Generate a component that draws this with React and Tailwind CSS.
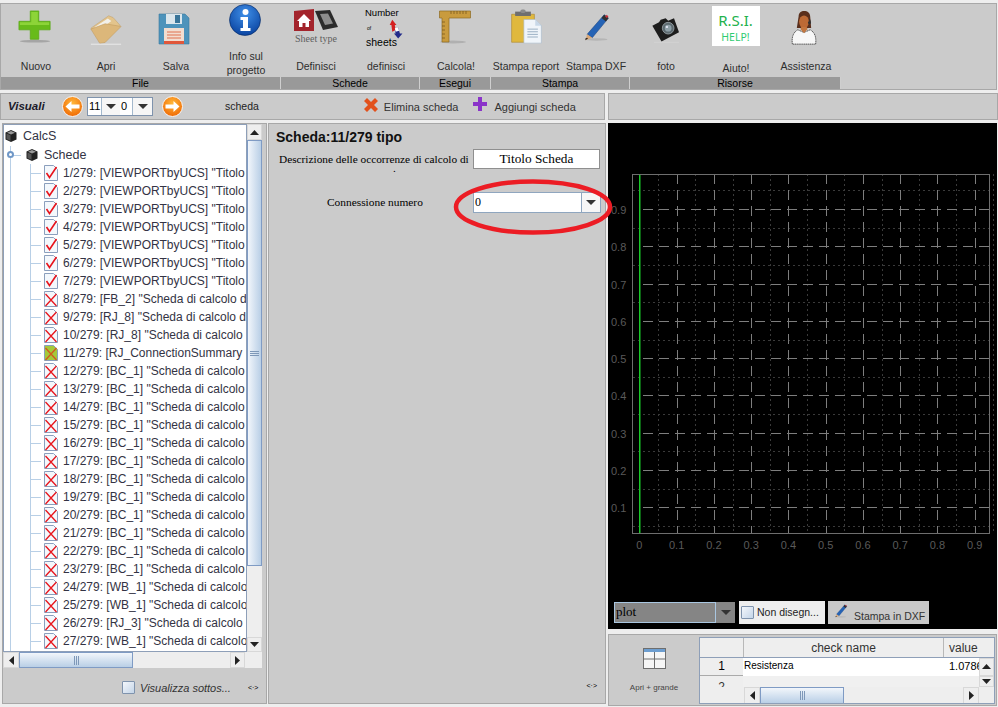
import React from 'react';

const treeRows = [
  ['1/279: [VIEWPORTbyUCS] "Titolo', 'ok'],
  ['2/279: [VIEWPORTbyUCS] "Titolo', 'ok'],
  ['3/279: [VIEWPORTbyUCS] "Titolo', 'ok'],
  ['4/279: [VIEWPORTbyUCS] "Titolo', 'ok'],
  ['5/279: [VIEWPORTbyUCS] "Titolo', 'ok'],
  ['6/279: [VIEWPORTbyUCS] "Titolo', 'ok'],
  ['7/279: [VIEWPORTbyUCS] "Titolo', 'ok'],
  ['8/279: [FB_2] "Scheda di calcolo d', 'no'],
  ['9/279: [RJ_8] "Scheda di calcolo d', 'no'],
  ['10/279: [RJ_8] "Scheda di calcolo', 'no'],
  ['11/279: [RJ_ConnectionSummary', 'sel'],
  ['12/279: [BC_1] "Scheda di calcolo', 'no'],
  ['13/279: [BC_1] "Scheda di calcolo', 'no'],
  ['14/279: [BC_1] "Scheda di calcolo', 'no'],
  ['15/279: [BC_1] "Scheda di calcolo', 'no'],
  ['16/279: [BC_1] "Scheda di calcolo', 'no'],
  ['17/279: [BC_1] "Scheda di calcolo', 'no'],
  ['18/279: [BC_1] "Scheda di calcolo', 'no'],
  ['19/279: [BC_1] "Scheda di calcolo', 'no'],
  ['20/279: [BC_1] "Scheda di calcolo', 'no'],
  ['21/279: [BC_1] "Scheda di calcolo', 'no'],
  ['22/279: [BC_1] "Scheda di calcolo', 'no'],
  ['23/279: [BC_1] "Scheda di calcolo', 'no'],
  ['24/279: [WB_1] "Scheda di calcolo', 'no'],
  ['25/279: [WB_1] "Scheda di calcolo', 'no'],
  ['26/279: [RJ_3] "Scheda di calcolo', 'no'],
  ['27/279: [WB_1] "Scheda di calcolo', 'no'],
  ['', 'no'],
];

const PlusIcon = () => (
  <svg width="34" height="34" viewBox="0 0 36 36">
    <ellipse cx="18" cy="33" rx="16" ry="1.5" fill="#a5a5a5" />
    <path d="M13 1h9v11h12v9H22v10h-9V21H1v-9h12z" fill="#68bb1a" stroke="#5aa915" strokeWidth="0.8" />
    <path d="M14 2h7v11h12v3H2v-3h12z" fill="#8dd438" />
  </svg>
);

const FolderIcon = () => (
  <svg width="36" height="32" viewBox="0 0 38 36">
    <path d="M2 16L22 2l5 2 8 9L14 30z" fill="#e3c48c" stroke="#bfa070" strokeWidth="0.6" />
    <path d="M6 15l15-10 4 3-15 11z" fill="#f2f0ea" />
    <path d="M2 17l16-6 18 3-18 18-6 1z" fill="#dcb77a" stroke="#c0995d" strokeWidth="0.6" />
    <path d="M2 34h34" stroke="#eeeeee" strokeWidth="1" />
  </svg>
);

const SaveIcon = () => (
  <svg width="32" height="32" viewBox="0 0 32 32">
    <path d="M1 1h26l4 4v26H1z" fill="#4d93bb" stroke="#3b7ba0" strokeWidth="0.6" />
    <rect x="8" y="1" width="16" height="10" fill="#dbe6ec" />
    <rect x="17" y="2" width="5" height="8" fill="#3a7599" />
    <rect x="6" y="15" width="20" height="16" fill="#f2ddd0" />
    <rect x="6" y="28" width="20" height="3" fill="#e0573a" />
    <path d="M9 19h14M9 22h14M9 25h14" stroke="#e0704f" strokeWidth="1" />
  </svg>
);

const InfoIcon = () => (
  <svg width="32" height="32" viewBox="0 0 32 32">
    <defs>
      <radialGradient id="infoG" cx="50%" cy="30%" r="75%">
        <stop offset="0%" stopColor="#3f8fe8" />
        <stop offset="100%" stopColor="#073f9c" />
      </radialGradient>
    </defs>
    <circle cx="16" cy="16" r="15.5" fill="url(#infoG)" stroke="#06285f" strokeWidth="0.6" />
    <circle cx="16.5" cy="8" r="3" fill="#ffffff" />
    <path d="M11.5 13h7.5v11h2.5v3H11.5v-3H14v-8h-2.5z" fill="#ffffff" />
  </svg>
);

const SheetTypeIcon = () => (
  <div className="flex w-[46px] flex-col items-center">
    <svg width="46" height="24" viewBox="0 0 46 24">
      <path d="M1 3l20-2v22L1 23z" fill="#a3242c" />
      <path d="M11 6L4 13h2v6h3.5v-4h3v4H16v-6h2z" fill="#ffffff" />
      <path d="M22 3l15-1 8 17-15 3z" fill="#2b2b2b" />
      <path d="M27 6l8-.5 5 10-8 1.5z" fill="#8d8d8d" />
    </svg>
    <span className='mt-[2px] whitespace-nowrap font-["Liberation_Serif",serif] text-[10px] leading-[10px] text-[#5e5e5e]'>Sheet type</span>
  </div>
);

const NumberSheetsIcon = () => (
  <div className="relative h-[42px] w-[44px] text-black">
    <span className="absolute left-[1px] top-[0px] text-[9.5px] leading-[10px]">Number</span>
    <span className="absolute left-[3px] top-[17px] text-[5px] leading-[6px]">of</span>
    <span className="absolute left-[2px] top-[29px] text-[10.5px] leading-[11px]">sheets</span>
    <svg className="absolute left-[24px] top-[11px]" width="17" height="22" viewBox="0 0 20 24">
      <path d="M5 0l5 6H8l1 6-4 2-1-8H2z" fill="#d42020" />
      <path d="M12 22L7 16h2l-1-4 4-3 2 7h3z" fill="#222a8a" />
      <path d="M8 10l4-1 1 4-4 1z" fill="#ffffff" />
    </svg>
  </div>
);

const RulerIcon = () => (
  <svg width="32" height="34" viewBox="0 0 32 34">
    <ellipse cx="14" cy="32" rx="13" ry="1.5" fill="#b0b0b0" />
    <path d="M0.5 1h31v7H10v24H3V8H0.5z" fill="#c99b3e" stroke="#8d6a22" strokeWidth="0.7" />
    <path d="M12 1v3M15 1v3M18 1v3M21 1v3M24 1v3M27 1v3M3 12h3M3 16h3M3 20h3M3 24h3M3 28h3" stroke="#70521a" strokeWidth="0.7" />
  </svg>
);

const ReportIcon = () => (
  <svg width="35" height="35" viewBox="0 0 36 40">
    <path d="M1 6h26v32H1z" fill="#e0b83e" stroke="#a98632" strokeWidth="0.7" />
    <rect x="5" y="3" width="18" height="5" fill="#6f6f6f" />
    <rect x="11" y="0.5" width="6" height="4" rx="2" fill="#8a8a8a" />
    <path d="M15 12h13l7 7v20H15z" fill="#f0f5fa" stroke="#a8b8c8" strokeWidth="0.7" />
    <path d="M28 12v7h7z" fill="#c8d8e8" />
    <path d="M19 23h12M19 26h12M19 29h12M19 32h12" stroke="#8fa6bc" strokeWidth="1" />
  </svg>
);

const PencilIcon = ({ size = 29 }) => (
  <svg width={size} height={size} viewBox="0 0 32 34">
    <ellipse cx="16" cy="31" rx="13" ry="1.5" fill="#b5b5b5" />
    <path d="M25 2l5 4-19 23-6-4z" fill="#2563b5" stroke="#173f7a" strokeWidth="0.6" />
    <path d="M25 2l5 4-3 4-5-4z" fill="#2f2f2f" />
    <path d="M28 2l2 2-2 2-2-2z" fill="#c7303a" />
    <path d="M5 25l6 4-8 3z" fill="#d9a878" />
    <path d="M3 30l2-1 1 1-3 2z" fill="#222222" />
  </svg>
);

const CameraIcon = () => (
  <svg width="31" height="30" viewBox="0 0 34 36">
    <path d="M0 14l8-4 2-3 6-2 3 3 7-3 6 17-21 11z" fill="#1d1d1d" />
    <circle cx="19" cy="17" r="7" fill="#5d6a70" stroke="#9aa4a8" strokeWidth="1" />
    <circle cx="19" cy="17" r="4" fill="#8fa0a8" />
    <circle cx="17.5" cy="15.5" r="1.4" fill="#dde0ee" />
    <path d="M2 34h30" stroke="#d8d8d8" strokeWidth="0.7" />
  </svg>
);

const SupportIcon = () => (
  <svg width="26" height="34" viewBox="0 0 28 38">
    <path d="M8 6c0-4 3-6 6-6 4 0 7 2 7 7l1 12H6z" fill="#5a2f1c" />
    <ellipse cx="14" cy="12" rx="5.5" ry="7" fill="#bd6a35" />
    <path d="M1 37c-1-8 1-13 6-16l7 3 7-3c5 3 7 8 6 16z" fill="#f7f7f7" stroke="#222222" strokeWidth="0.8" strokeDasharray="1.5 0.6" />
    <path d="M10 20l4 5 4-5-1-2h-6z" fill="#c4763e" />
    <path d="M20 9c1 2 1 5 0 6" stroke="#333333" strokeWidth="1.2" fill="none" />
    <circle cx="20" cy="13" r="1.6" fill="#333333" />
  </svg>
);

const ToolButton = ({ label, children, iconTop = 'pt-[6px]', labelClass = 'mt-0' }) => (
  <div className="flex w-[70px] shrink-0 flex-col items-center overflow-hidden">
    <div className={`flex h-[55px] w-full justify-center ${iconTop}`}>{children}</div>
    <div className={`w-full whitespace-nowrap text-center text-[10.5px] leading-[14px] text-[#2e2e2e] ${labelClass}`}>{label}</div>
  </div>
);

const GroupBar = ({ label, width }) => (
  <div className={`${width} h-[12px] border-r border-[#cfcfcf] bg-[#999999] text-center text-[10.5px] leading-[12px] text-black`}>
    {label}
  </div>
);

const ArrowButton = ({ dir }) => (
  <svg width="21" height="21" viewBox="0 0 21 21">
    <defs>
      <radialGradient id={`arrow-${dir}`} cx="50%" cy="35%" r="65%">
        <stop offset="0%" stopColor="#ffb83a" />
        <stop offset="100%" stopColor="#f06a05" />
      </radialGradient>
    </defs>
    <circle cx="10.5" cy="10.5" r="10" fill={`url(#arrow-${dir})`} stroke="#f5f5f5" strokeWidth="1" />
    {dir === 'left'
      ? <path d="M3.5 10.5l6-5.5v3.5h8v4h-8V16z" fill="#ffffff" />
      : <path d="M17.5 10.5l-6-5.5v3.5h-8v4h8V16z" fill="#ffffff" />}
  </svg>
);

const Caret = ({ className = '' }) => (
  <svg className={className} width="10" height="5" viewBox="0 0 10 5"><path d="M0 0h10L5 5z" fill="#333333" /></svg>
);

const SpinBox = ({ value, inputW, btnW }) => (
  <div className="flex h-[17px] items-center">
    <div className={`${inputW} h-full border-r border-[#a3b8cc] bg-white pl-[1px] text-[11px] leading-[16px] text-black`}>{value}</div>
    <div className={`${btnW} flex h-full items-center justify-center bg-[#f6f6f6]`}><Caret /></div>
  </div>
);

const CubeIcon = () => (
  <svg width="12" height="12" viewBox="0 0 12 12">
    <path d="M6 0l5.5 2.5v7L6 12 .5 9.500v-7z" fill="#222222" />
    <path d="M6 1L10 2.800 6 4.500 2 2.800z" fill="#9a9a9a" />
    <path d="M1.500 3.500L5.500 5.300V10.700L1.500 8.900z" fill="#555555" />
  </svg>
);

const DocIcon = ({ kind }) => (
  <svg className="shrink-0" width="14" height="16" viewBox="0 0 14 16">
    <path d="M.5 .5h9l4 4v11H.5z" fill={kind === 'sel' ? '#a4c93a' : '#f4f8fc'} stroke="#8b9fbd" strokeWidth="1" />
    {kind === 'ok' && <path d="M2.500 8l3 4.500L12.500 2" fill="none" stroke="#e8141c" strokeWidth="1.600" />}
    {kind !== 'ok' && <path d="M1.500 3l11 12M12.500 3l-11 12" stroke={kind === 'sel' ? '#d2591e' : '#e8141c'} strokeWidth="1.300" />}
  </svg>
);

const ScrollArrow = ({ dir }) => {
  const paths = { up: 'M0 5h9L4.500 0z', down: 'M0 0h9L4.500 5z', left: 'M5 0v9L0 4.500z', right: 'M0 0v9l5-4.500z' };
  const size = dir === 'up' || dir === 'down' ? [9, 5] : [5, 9];
  return <svg width={size[0]} height={size[1]} viewBox={`0 0 ${size[0]} ${size[1]}`}><path d={paths[dir]} fill="#222222" /></svg>;
};

const ScrollBtn = ({ dir, className }) => (
  <div className={`flex shrink-0 items-center justify-center border border-[#d8d8d8] bg-[#eeeeee] ${className}`}>
    <ScrollArrow dir={dir} />
  </div>
);

const HGrip = () => (
  <div className="flex gap-[1px]">
    <div className="h-[9px] w-[1px] bg-[#7e98b8]" />
    <div className="h-[9px] w-[1px] bg-[#7e98b8]" />
    <div className="h-[9px] w-[1px] bg-[#7e98b8]" />
  </div>
);

const TreeRow = ({ text, kind }) => (
  <div className="flex h-[18px] shrink-0 items-center">
    <div className="ml-[6px] h-full w-[1px] shrink-0 bg-[#b8cfe6]" />
    <div className="ml-[19px] h-full w-[1px] shrink-0 bg-[#b8cfe6]" />
    <div className="h-[1px] w-[10px] shrink-0 bg-[#b8cfe6]" />
    <div className="ml-[3px] shrink-0"><DocIcon kind={kind} /></div>
    <span className="ml-[5px] shrink-0 whitespace-nowrap text-[12px] leading-[18px] text-[#333344]">{text}</span>
  </div>
);

const TreePanel = () => (
  <div className="flex h-[581px] w-[265px] shrink-0 flex-col border border-[#a8a8a8] bg-[#cbcbcb]">
    <div className="flex h-[528px] shrink-0">
      <div className="w-[244px] shrink-0 overflow-hidden border border-[#8e9fb8] bg-white pt-[1px]">
        <div className="flex h-[20px] items-center pl-[1px]">
          <CubeIcon />
          <span className="ml-[6px] text-[12.5px] text-[#333344]">CalcS</span>
        </div>
        <div className="flex h-[18px] items-center">
          <div className="relative ml-[6px] h-full w-[1px] bg-[#b8cfe6]">
            <div className="absolute left-[-3px] top-[5px] h-[7px] w-[7px] rounded-full border-2 border-[#6f97c7] bg-white" />
          </div>
          <div className="h-[1px] w-[10px] bg-[#b8cfe6]" />
          <div className="ml-[5px]"><CubeIcon /></div>
          <span className="ml-[6px] text-[12.5px] text-[#333344]">Schede</span>
        </div>
        {treeRows.map((r, i) => <TreeRow key={i} text={r[0]} kind={r[1]} />)}
      </div>
      <div className="flex w-[15px] shrink-0 flex-col bg-[#eeeeee]">
        <ScrollBtn dir="up" className="h-[16px] w-[15px]" />
        <div className="flex h-[426px] w-[15px] shrink-0 items-center justify-center border border-[#7f9bc4] bg-gradient-to-r from-[#f2f6fb] to-[#b9cfe6]">
          <div className="flex flex-col gap-[1px]">
            <div className="h-[1px] w-[9px] bg-[#7e98b8]" />
            <div className="h-[1px] w-[9px] bg-[#7e98b8]" />
            <div className="h-[1px] w-[9px] bg-[#7e98b8]" />
          </div>
        </div>
        <div className="flex-1" />
        <ScrollBtn dir="down" className="h-[15px] w-[15px]" />
      </div>
    </div>
    <div className="flex h-[16px] w-[259px] shrink-0 bg-[#eeeeee]">
      <ScrollBtn dir="left" className="w-[16px]" />
      <div className="flex w-[114px] items-center justify-center border border-[#7f9bc4] bg-gradient-to-b from-[#f2f6fb] to-[#b9cfe6]"><HGrip /></div>
      <div className="w-[97px]" />
      <ScrollBtn dir="right" className="w-[15px]" />
      <div className="flex-1" />
    </div>
    <div className="flex flex-1 items-start pt-[13px]">
      <div className="ml-[119px] h-[13px] w-[13px] rounded-[1px] border border-[#7f93ad] bg-gradient-to-br from-[#f4f7fb] to-[#c4d5e8]" />
      <span className="ml-[5px] text-[11px] italic leading-[14px] text-[#333333]">Visualizza sottos...</span>
      <span className="ml-[17px] mt-[2px] text-[7px] leading-[10px] text-black">&lt;·&gt;</span>
    </div>
  </div>
);

const MiddlePanel = () => (
  <div className='flex h-[581px] w-[338px] shrink-0 flex-col border border-[#a8a8a8] bg-[#cbcbcb] font-["Liberation_Serif",serif]'>
    <div className='ml-[7px] mt-[5px] font-["Liberation_Sans",sans-serif] text-[14px] font-bold leading-[17px] text-[#111111]'>Scheda:11/279 tipo</div>
    <div className="ml-[10px] mt-[3px] flex items-center">
      <div className="relative w-[192px] whitespace-nowrap text-[11.3px] leading-[12px] text-black">
        <span>Descrizione delle occorrenze di calcolo di</span>
        <span className="absolute left-[114px] top-[12px] leading-[6px]">.</span>
      </div>
      <div className="ml-[2px] h-[20px] w-[127px] border border-[#8f8f8f] bg-white text-center text-[13.3px] leading-[18px] text-black">Titolo Scheda</div>
    </div>
    <div className="mt-[23px] flex items-center">
      <span className="mb-[2px] ml-[58px] w-[146px] text-[11.4px] leading-[12px] text-black">Connessione numero</span>
      <div className="flex h-[21px] w-[128px] border border-[#8fa6bf] bg-white">
        <span className="flex-1 border-r border-[#8fa6bf] pl-[1px] text-[12px] leading-[18px] text-black">0</span>
        <div className="flex w-[18px] items-center justify-center bg-[#f6f6f6]"><Caret /></div>
      </div>
    </div>
    <div className="flex-1" />
    <div className='mb-[12px] mr-[8px] self-end font-["Liberation_Sans",sans-serif] text-[7px] leading-[10px] text-black'>&lt;·&gt;</div>
  </div>
);

const ticks = [0.1, 0.2, 0.3, 0.4, 0.5, 0.6, 0.7, 0.8, 0.9];
const minors = [0.05, 0.15, 0.25, 0.35, 0.45, 0.55, 0.65, 0.75, 0.85, 0.95];
const px = (v) => 31.4 + 372.5 * v;
const py = (v) => 421.6 - 372.9 * v;

const Plot = () => (
  <svg className="block" width="389" height="478" viewBox="0 0 389 478">
    <g stroke="#3a3a3a" strokeWidth="1" strokeDasharray="2 3">
      {minors.map((v) => <line key={`mv${v}`} x1={Math.round(px(v)) + 0.5} y1="51" x2={Math.round(px(v)) + 0.5} y2="410" />)}
      {minors.map((v) => <line key={`mh${v}`} x1="25" y1={Math.round(py(v)) + 0.5} x2="382" y2={Math.round(py(v)) + 0.5} />)}
    </g>
    <g stroke="#7e7e7e" strokeWidth="1" strokeDasharray="10 6">
      {ticks.map((v) => <line key={`v${v}`} x1={Math.round(px(v)) + 0.5} y1="51" x2={Math.round(px(v)) + 0.5} y2="410" />)}
      {ticks.map((v) => <line key={`h${v}`} x1="35" y1={Math.round(py(v)) + 0.5} x2="382" y2={Math.round(py(v)) + 0.5} />)}
    </g>
    <rect x="24.500" y="51.500" width="357" height="359" fill="none" stroke="#6e6e6e" strokeWidth="1" />
    <rect x="31" y="52" width="1.500" height="358" fill="#18c828" />
    <g fontFamily="Liberation Sans, sans-serif" fontSize="11" fill="#5a5a5a">
      {ticks.map((v) => <text key={`ty${v}`} x="3" y={py(v) + 5}>{v}</text>)}
      <text x={px(0)} y="426" textAnchor="middle">0</text>
      {ticks.map((v) => <text key={`tx${v}`} x={px(v)} y="426" textAnchor="middle">{v}</text>)}
    </g>
  </svg>
);

const ChartPanel = () => (
  <div className="flex h-[506px] shrink-0 flex-col bg-black">
    <Plot />
    <div className="ml-[6px] mt-[1px] flex items-start">
      <div className='flex h-[21px] w-[121px] items-stretch bg-[#858585] font-["Liberation_Serif",serif] text-[13px]'>
        <div className="flex-1 border border-[#a9c6e0] pl-[1px] leading-[18px] text-black">plot</div>
        <div className="flex w-[19px] items-center justify-center"><Caret /></div>
      </div>
      <div className="ml-[4px] mt-[-1px] flex h-[23px] w-[86px] items-center bg-[#eeeeee] pl-[2px]">
        <div className="h-[13px] w-[13px] rounded-[1px] border border-[#7f93ad] bg-gradient-to-br from-[#f4f7fb] to-[#c4d5e8]" />
        <span className="ml-[3px] whitespace-nowrap text-[10.5px] text-[#222222]">Non disegn...</span>
      </div>
      <div className="ml-[3px] mt-[-1px] flex h-[23px] w-[101px] items-center bg-[#c9c9c9] pl-[6px]">
        <div className="mt-[-4px]"><PencilIcon size={14} /></div>
        <span className="ml-[6px] mt-[8px] whitespace-nowrap text-[10.5px] text-[#333333]">Stampa in DXF</span>
      </div>
    </div>
  </div>
);

const TableIcon = () => (
  <svg width="23" height="21" viewBox="0 0 23 21">
    <rect x="0.500" y="0.500" width="22" height="20" fill="#f6f6f6" stroke="#6e6e6e" />
    <rect x="1" y="1" width="21" height="3" fill="#6d9ed0" />
    <path d="M1 11h21M11.500 4v16" stroke="#6e6e6e" />
  </svg>
);

const CheckTable = () => (
  <div className="relative flex h-[67px] w-[296px] shrink-0 flex-col overflow-hidden border border-[#8e9fb8] bg-[#eeeeee] text-[12px] text-[#333333]">
    <div className="flex h-[20px] shrink-0 border-b border-[#8e9fb8]">
      <div className="w-[44px] border-r border-[#b8b8b8]" />
      <div className="w-[200px] border-r border-[#b8b8b8] text-center leading-[20px]">check name</div>
      <div className="pl-[5px] leading-[20px]">value</div>
    </div>
    <div className="flex h-[18px] shrink-0">
      <div className="w-[43px] border-b border-[#aaaaaa] bg-[#eeeeee] text-center leading-[17px] text-black">1</div>
      <div className="flex w-[236px] bg-white">
        <span className="w-[201px] pl-[1px] text-[10px] leading-[16px] text-black">Resistenza</span>
        <span className="w-[35px] overflow-hidden whitespace-nowrap pl-[5px] text-[11px] leading-[16px] text-black">1.0786</span>
      </div>
      <ScrollBtn dir="up" className="h-[18px] w-[15px]" />
    </div>
    <div className="flex h-[11px] shrink-0">
      <div className="h-[11px] w-[43px] overflow-hidden text-center leading-[22px] text-[#333333]">2</div>
      <div className="w-[236px] bg-[#f0f0f0]" />
      <ScrollBtn dir="down" className="h-[11px] w-[15px]" />
    </div>
    <div className="z-10 ml-[44px] flex h-[17px] shrink-0 bg-[#eeeeee]">
      <ScrollBtn dir="left" className="w-[16px]" />
      <div className="flex w-[84px] items-center justify-center border border-[#7f9bc4] bg-gradient-to-b from-[#f2f6fb] to-[#b9cfe6]"><HGrip /></div>
      <div className="w-[119px]" />
      <ScrollBtn dir="right" className="w-[16px]" />
    </div>
  </div>
);

const BottomPanel = () => (
  <div className="mt-[5px] flex h-[72px] items-center border border-[#a8a8a8] bg-[#cbcbcb]">
    <div className="flex w-[90px] shrink-0 flex-col items-center">
      <TableIcon />
      <span className="mt-[14px] text-[8px] leading-[10px] text-[#444444]">Apri + grande</span>
    </div>
    <CheckTable />
  </div>
);

export default function App() {
  return (
    <div className='relative h-[707px] w-[998px] overflow-hidden bg-[#eeeeee] pt-[3px] font-["Liberation_Sans",Arial,sans-serif]'>
      {/* toolbar */}
      <div className="flex h-[87px] w-[997px] flex-col border border-[#a8a8a8] bg-[#cbcbcb]">
        <div className="flex h-[73px] shrink-0">
          <ToolButton label="Nuovo" iconTop="pt-[6px] pr-[2px]"><PlusIcon /></ToolButton>
          <ToolButton label="Apri" iconTop="pt-[10px]"><FolderIcon /></ToolButton>
          <ToolButton label="Salva" iconTop="pt-[9px] pr-[4px]"><SaveIcon /></ToolButton>
          <ToolButton label="Info sul progetto" iconTop="pt-0 pr-[3px]" labelClass="mt-0 !whitespace-normal px-[12px]"><InfoIcon /></ToolButton>
          <ToolButton label="Definisci" iconTop="pt-[4px]"><SheetTypeIcon /></ToolButton>
          <ToolButton label="definisci" iconTop="pt-[4px]"><NumberSheetsIcon /></ToolButton>
          <ToolButton label="Calcola!" iconTop="pt-[6px] pr-[2px]"><RulerIcon /></ToolButton>
          <ToolButton label="Stampa report" iconTop="pt-[5px]"><ReportIcon /></ToolButton>
          <ToolButton label="Stampa DXF" iconTop="pt-[9px]"><PencilIcon /></ToolButton>
          <ToolButton label="foto" iconTop="pt-[10px]"><CameraIcon /></ToolButton>
          <ToolButton label="Aiuto!" iconTop="pt-[2px] pr-[1px]" labelClass="mt-[2px]">
            <div className='flex h-[40px] w-[48px] flex-col items-center bg-white font-["Noto_Sans",sans-serif] text-[#22b14c]'>
              <span className="mt-[5px] text-[15px] leading-[18px]">R.S.I.</span>
              <span className="mt-[2px] text-[10.5px] leading-[12px] text-[#2ecc71]">HELP!</span>
            </div>
          </ToolButton>
          <ToolButton label="Assistenza" iconTop="pt-[7px] pr-[4px]"><SupportIcon /></ToolButton>
        </div>
        <div className="flex">
          <GroupBar label="File" width="w-[280px]" />
          <GroupBar label="Schede" width="w-[139px]" />
          <GroupBar label="Esegui" width="w-[71px]" />
          <GroupBar label="Stampa" width="w-[139px]" />
          <GroupBar label="Risorse" width="w-[211px]" />
        </div>
      </div>

      {/* navigation row */}
      <div className="mt-[3px] flex h-[27px] gap-[3px]">
        <div className="flex w-[605px] shrink-0 items-center border border-[#a8a8a8] bg-[#cbcbcb]">
          <span className="ml-[7px] w-[54px] text-[11.5px] font-bold italic text-[#1a1a2a]">Visuali</span>
          <ArrowButton dir="left" />
          <div className="ml-[4px] flex border border-[#7f93ad] bg-white">
            <SpinBox value="11" inputW="w-[14px]" btnW="w-[18px]" />
            <SpinBox value="0" inputW="w-[13px]" btnW="w-[19px]" />
          </div>
          <div className="ml-[9px]"><ArrowButton dir="right" /></div>
          <span className="ml-[42px] text-[10.5px] text-[#222222]">scheda</span>
          <svg className="mb-[4px] ml-[105px]" width="14" height="14" viewBox="0 0 14 14"><path d="M3 0l4 4 4-4 3 3-4 4 4 4-3 3-4-4-4 4-3-3 4-4-4-4z" fill="#e2511c" /></svg>
          <span className="ml-[6px] mt-[2px] text-[11px] text-[#333333]">Elimina scheda</span>
          <svg className="mb-[6px] ml-[15px]" width="14" height="14" viewBox="0 0 14 14"><path d="M5 0h4v5h5v4H9v5H5V9H0V5h5z" fill="#8a34c9" /></svg>
          <span className="ml-[7px] mt-[2px] text-[11px] text-[#333333]">Aggiungi scheda</span>
        </div>
        <div className="flex-1 border border-[#a8a8a8] bg-[#cbcbcb]" />
      </div>

      {/* main area */}
      <div className="mt-[3px] flex">
        <div className="ml-[2px]"><TreePanel /></div>
        <div className="ml-[1px]"><MiddlePanel /></div>
        <div className="ml-[2px] w-[389px] shrink-0">
          <ChartPanel />
          <BottomPanel />
        </div>
      </div>

      {/* hand drawn highlight over the combo box */}
      <svg className="pointer-events-none absolute left-[452px] top-[177px]" width="162" height="60" viewBox="0 0 162 60">
        <ellipse cx="81" cy="30" rx="77" ry="25.500" fill="none" stroke="#ec1c24" strokeWidth="4.500" />
      </svg>
    </div>
  );
}
